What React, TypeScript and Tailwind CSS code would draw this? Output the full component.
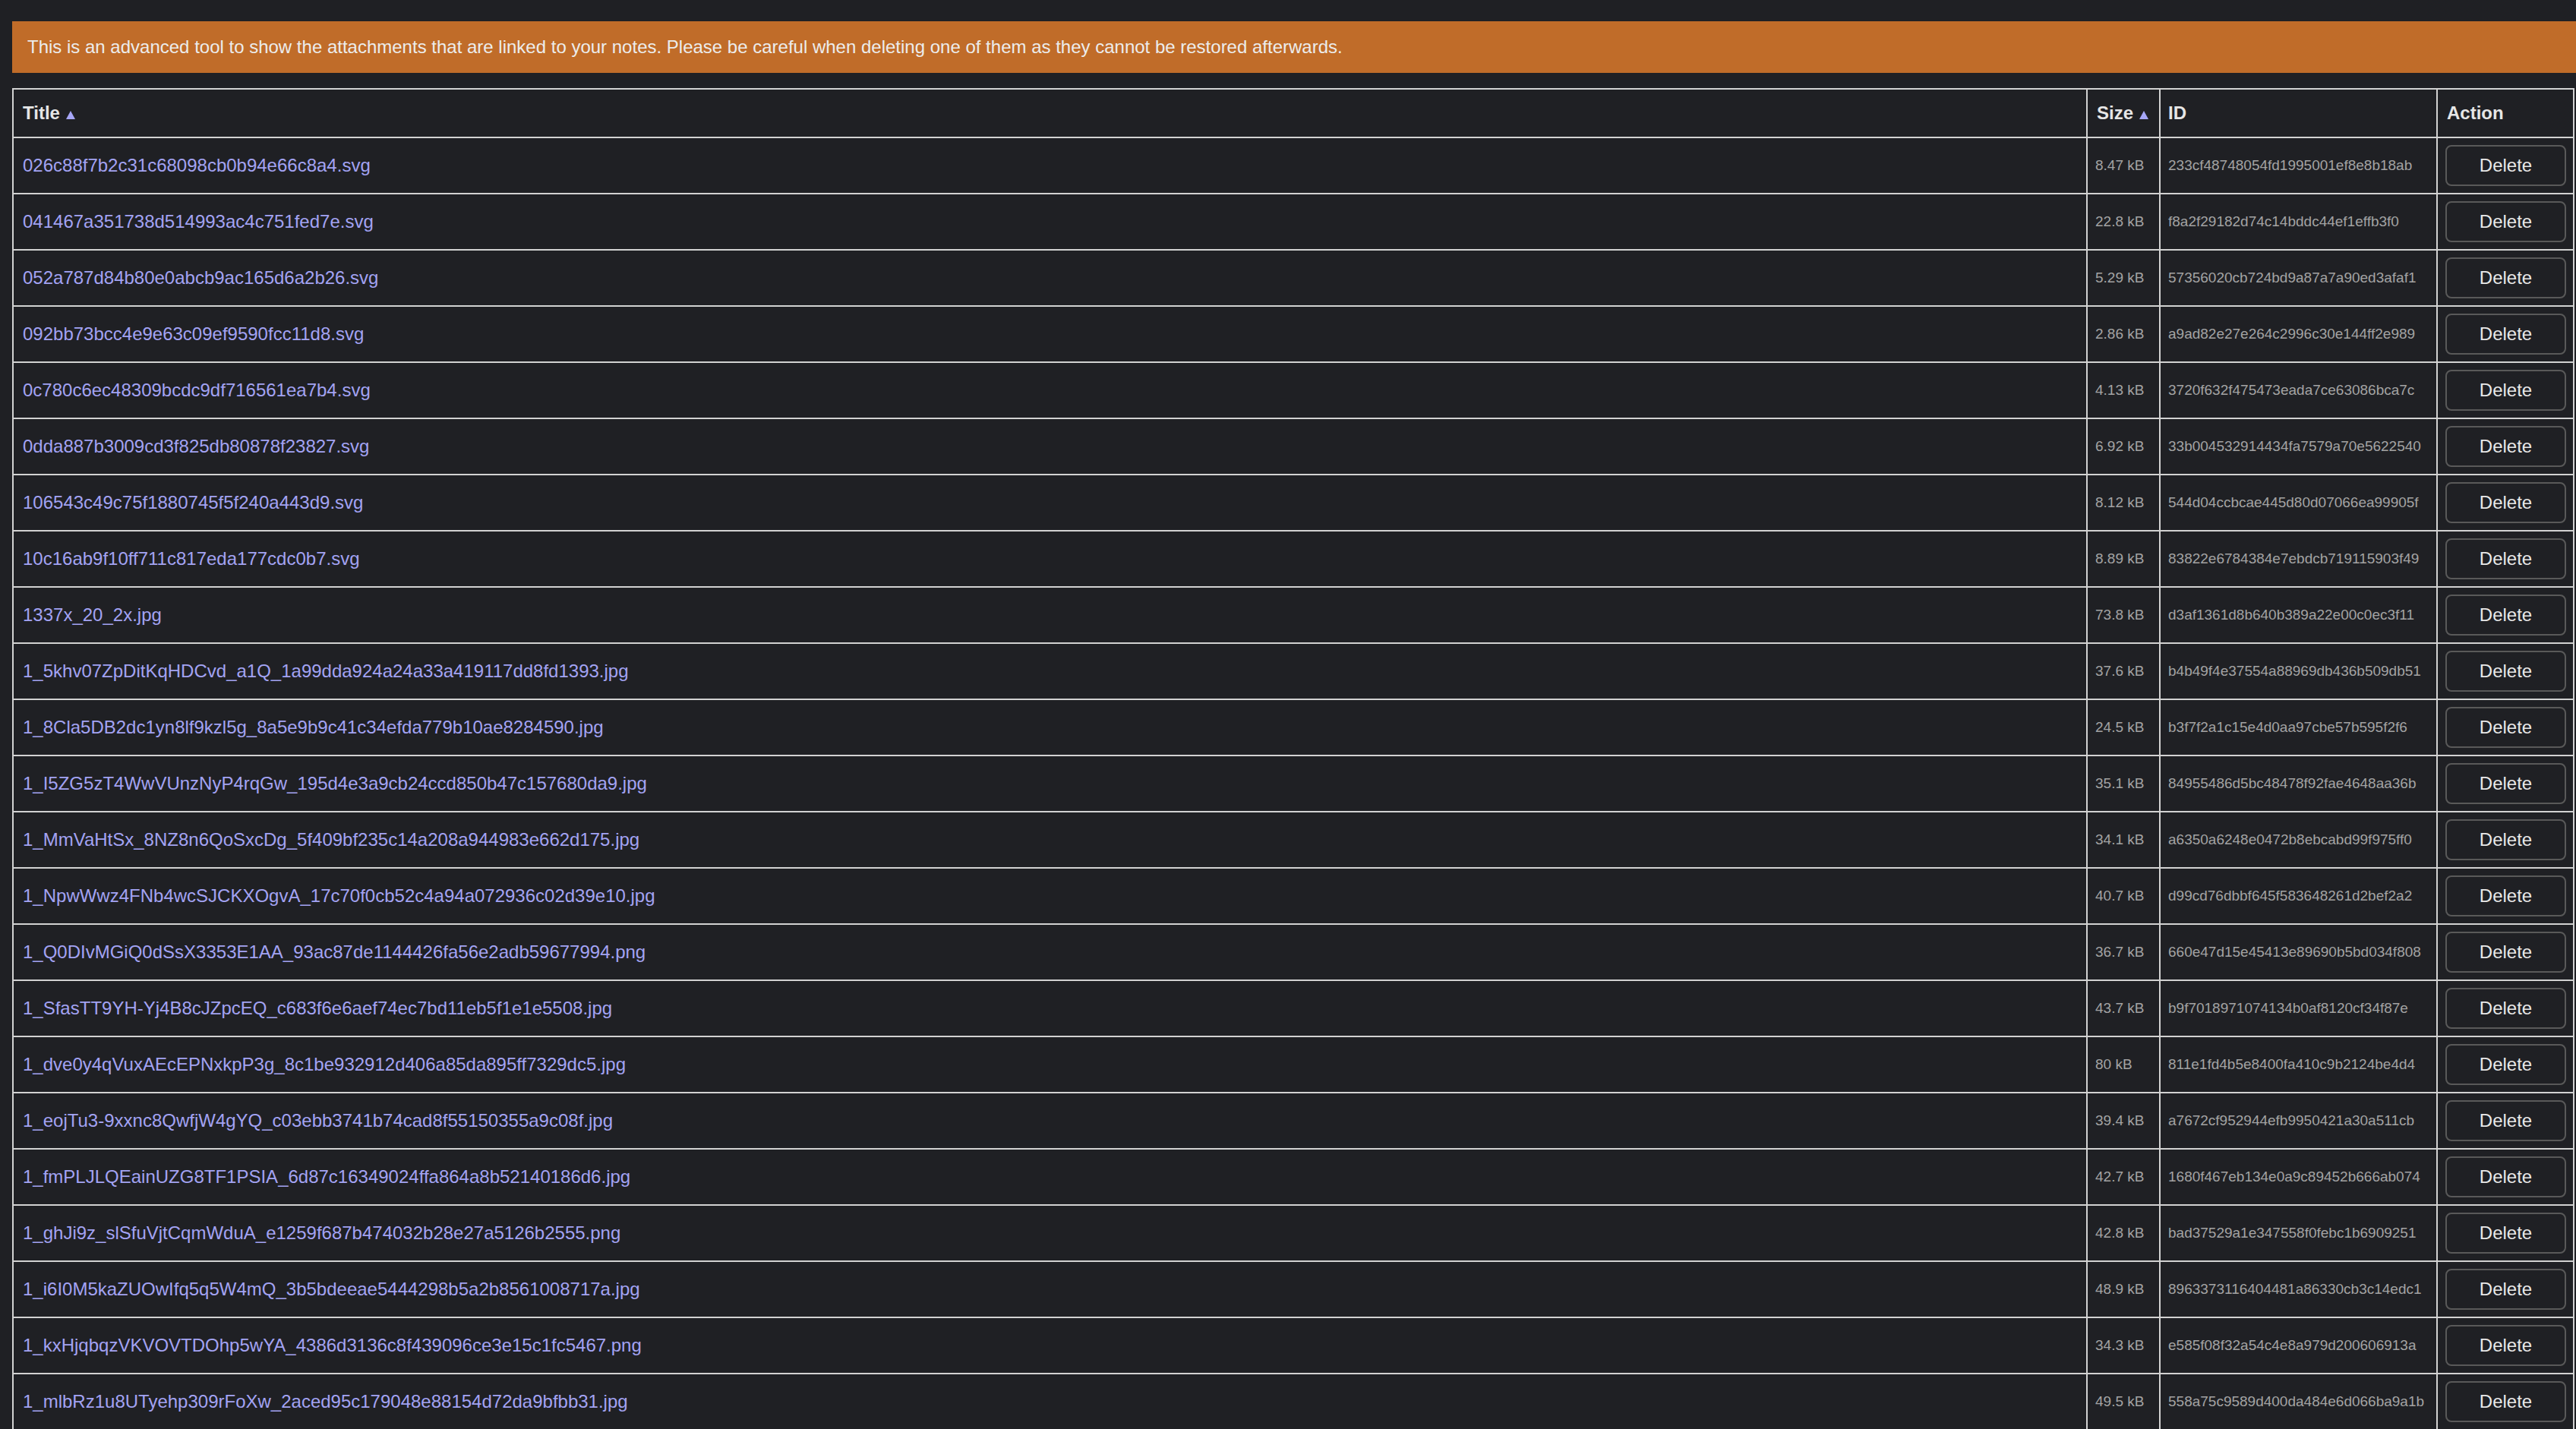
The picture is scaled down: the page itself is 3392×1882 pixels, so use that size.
const rows = [
  ["026c88f7b2c31c68098cb0b94e66c8a4.svg", "8.47 kB", "233cf48748054fd1995001ef8e8b18ab"],
  ["041467a351738d514993ac4c751fed7e.svg", "22.8 kB", "f8a2f29182d74c14bddc44ef1effb3f0"],
  ["052a787d84b80e0abcb9ac165d6a2b26.svg", "5.29 kB", "57356020cb724bd9a87a7a90ed3afaf1"],
  ["092bb73bcc4e9e63c09ef9590fcc11d8.svg", "2.86 kB", "a9ad82e27e264c2996c30e144ff2e989"],
  ["0c780c6ec48309bcdc9df716561ea7b4.svg", "4.13 kB", "3720f632f475473eada7ce63086bca7c"],
  ["0dda887b3009cd3f825db80878f23827.svg", "6.92 kB", "33b004532914434fa7579a70e5622540"],
  ["106543c49c75f1880745f5f240a443d9.svg", "8.12 kB", "544d04ccbcae445d80d07066ea99905f"],
  ["10c16ab9f10ff711c817eda177cdc0b7.svg", "8.89 kB", "83822e6784384e7ebdcb719115903f49"],
  ["1337x_20_2x.jpg", "73.8 kB", "d3af1361d8b640b389a22e00c0ec3f11"],
  ["1_5khv07ZpDitKqHDCvd_a1Q_1a99dda924a24a33a419117dd8fd1393.jpg", "37.6 kB", "b4b49f4e37554a88969db436b509db51"],
  ["1_8Cla5DB2dc1yn8lf9kzl5g_8a5e9b9c41c34efda779b10ae8284590.jpg", "24.5 kB", "b3f7f2a1c15e4d0aa97cbe57b595f2f6"],
  ["1_I5ZG5zT4WwVUnzNyP4rqGw_195d4e3a9cb24ccd850b47c157680da9.jpg", "35.1 kB", "84955486d5bc48478f92fae4648aa36b"],
  ["1_MmVaHtSx_8NZ8n6QoSxcDg_5f409bf235c14a208a944983e662d175.jpg", "34.1 kB", "a6350a6248e0472b8ebcabd99f975ff0"],
  ["1_NpwWwz4FNb4wcSJCKXOgvA_17c70f0cb52c4a94a072936c02d39e10.jpg", "40.7 kB", "d99cd76dbbf645f583648261d2bef2a2"],
  ["1_Q0DIvMGiQ0dSsX3353E1AA_93ac87de1144426fa56e2adb59677994.png", "36.7 kB", "660e47d15e45413e89690b5bd034f808"],
  ["1_SfasTT9YH-Yj4B8cJZpcEQ_c683f6e6aef74ec7bd11eb5f1e1e5508.jpg", "43.7 kB", "b9f7018971074134b0af8120cf34f87e"],
  ["1_dve0y4qVuxAEcEPNxkpP3g_8c1be932912d406a85da895ff7329dc5.jpg", "80 kB", "811e1fd4b5e8400fa410c9b2124be4d4"],
  ["1_eojTu3-9xxnc8QwfjW4gYQ_c03ebb3741b74cad8f55150355a9c08f.jpg", "39.4 kB", "a7672cf952944efb9950421a30a511cb"],
  ["1_fmPLJLQEainUZG8TF1PSIA_6d87c16349024ffa864a8b52140186d6.jpg", "42.7 kB", "1680f467eb134e0a9c89452b666ab074"],
  ["1_ghJi9z_slSfuVjtCqmWduA_e1259f687b474032b28e27a5126b2555.png", "42.8 kB", "bad37529a1e347558f0febc1b6909251"],
  ["1_i6I0M5kaZUOwIfq5q5W4mQ_3b5bdeeae5444298b5a2b8561008717a.jpg", "48.9 kB", "8963373116404481a86330cb3c14edc1"],
  ["1_kxHjqbqzVKVOVTDOhp5wYA_4386d3136c8f439096ce3e15c1fc5467.png", "34.3 kB", "e585f08f32a54c4e8a979d200606913a"],
  ["1_mlbRz1u8UTyehp309rFoXw_2aced95c179048e88154d72da9bfbb31.jpg", "49.5 kB", "558a75c9589d400da484e6d066ba9a1b"],
];

function SortArrow() {
  return (
    <svg width="12" height="11" viewBox="0 0 12 11" className="inline-block ml-2 align-baseline">
      <polygon points="6,0 12,11 0,11" fill="#a6a6f7" />
    </svg>
  );
}

export default function App() {
  return (
    <div className="h-screen w-full overflow-hidden bg-[#1f2024] pt-[28px] pl-4 font-['Liberation_Sans',Arial,sans-serif]">
      {/* Warning banner */}
      <div className="flex h-[68px] w-[3376px] items-center bg-[#c06c29] px-[20px] text-[24px] text-[#ececec]">
        This is an advanced tool to show the attachments that are linked to your notes. Please be careful when deleting one of them as they cannot be restored afterwards.
      </div>

      {/* Attachments table */}
      <table className="mt-[20px] w-[3374px] table-fixed border-collapse border-2 border-[#d2d2d2]">
        <colgroup>
          <col />
          <col className="w-[96px]" />
          <col className="w-[365px]" />
          <col className="w-[180px]" />
        </colgroup>
        <thead>
          <tr className="h-[64px] text-left text-[24px] font-bold text-[#e6e6e6]">
            <th className="border-2 border-[#d2d2d2] px-3">
              Title
              <SortArrow />
            </th>
            <th className="border-2 border-[#d2d2d2] px-3 whitespace-nowrap">
              Size
              <SortArrow />
            </th>
            <th className="border-2 border-[#d2d2d2] px-[10px]">ID</th>
            <th className="border-2 border-[#d2d2d2] px-3">Action</th>
          </tr>
        </thead>
        <tbody>
          {rows.map(([title, size, id]) => (
            <tr key={id} className="h-[74px]">
              <td className="border-2 border-[#d2d2d2] px-3 text-[24px] text-[#a3a3f3] whitespace-nowrap">
                {title}
              </td>
              <td className="border-2 border-[#d2d2d2] px-[10px] text-[19px] text-[#a3a3a3] whitespace-nowrap">
                {size}
              </td>
              <td className="border-2 border-[#d2d2d2] px-[10px] text-[19px] text-[#a3a3a3] whitespace-nowrap">
                {id}
              </td>
              <td className="border-2 border-[#d2d2d2] px-[10px]">
                <button className="h-[54px] w-[159px] rounded-lg border-2 border-[#595959] bg-[#1f2024] text-[24px] text-[#e8e8e8]">
                  Delete
                </button>
              </td>
            </tr>
          ))}
        </tbody>
      </table>
    </div>
  );
}
